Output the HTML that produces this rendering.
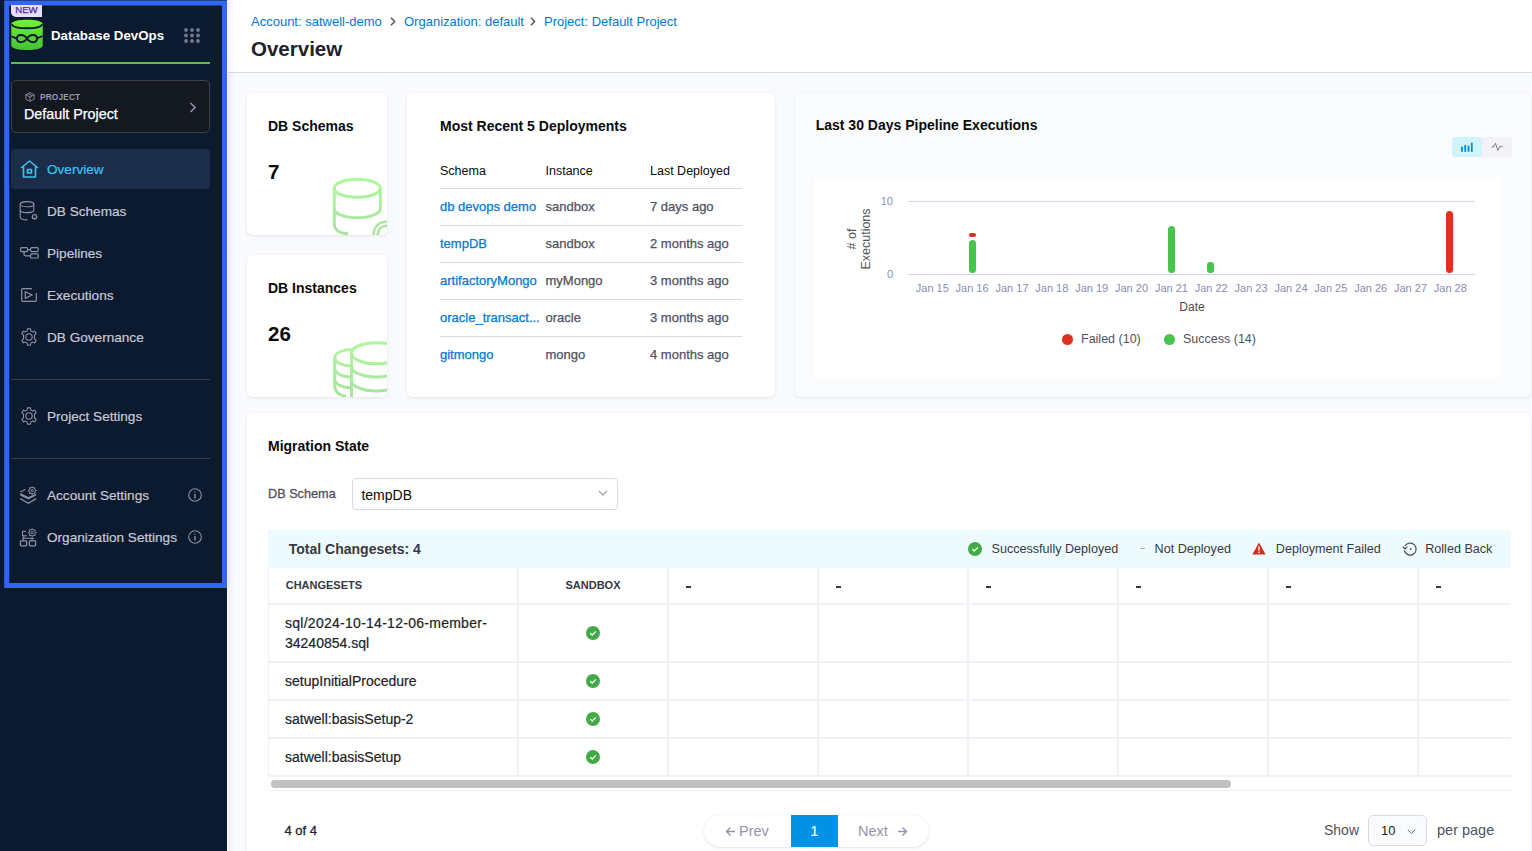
<!DOCTYPE html>
<html><head><meta charset="utf-8">
<style>
*{box-sizing:border-box;margin:0;padding:0}
html,body{width:1532px;height:851px;overflow:hidden;background:#f9fafd;font-family:"Liberation Sans",sans-serif;}
.a{position:absolute;white-space:nowrap;line-height:1}
#side{position:absolute;left:0;top:0;width:227px;height:851px;background:#0c1a2f}
#outline{position:absolute;left:4px;top:0.7px;width:223px;height:587.3px;border:5px solid #3264f5;border-top-width:4.6px}
.nav{position:absolute;left:11px;width:199px;height:40px;border-radius:4px;color:#c7c8d6;font-size:13.6px}
.nav .t{position:absolute;left:36px;top:13.5px;line-height:1;white-space:nowrap;-webkit-text-stroke:0.2px currentColor}
.nav svg{position:absolute;left:9px;top:11px;overflow:visible}
.nav.act{background:#1b2d48;color:#3dc3f3}
.dv{position:absolute;left:11px;width:199px;height:1px;background:#383b47}
#hdr{position:absolute;left:227px;top:0;width:1305px;height:73px;background:#fff;border-bottom:1px solid #d9dae5}
.card{position:absolute;background:#fff;border-radius:5px;box-shadow:0 0 1px rgba(40,41,61,.05),0 1px 3px rgba(96,97,112,.13)}
.h{font-weight:bold;color:#0b0b0d;font-size:14px}
.lk{font-size:13px;color:#0278d5;-webkit-text-stroke:0.25px #0278d5}
.gr{font-size:13px;color:#4f5162;-webkit-text-stroke:0.25px #4f5162}
.ax{font-size:11px;color:#8a8db0;line-height:11px}
.lg{font-size:12.5px;color:#4f5162;line-height:14px}
.th{font-size:11px;font-weight:bold;color:#383946}
.td{font-size:14px;color:#22222a;-webkit-text-stroke:0.2px #22222a}
.lgd{font-size:12.6px;color:#383946}
</style></head><body>
<!-- SIDEBAR -->
<div id="side">
  <svg class="a" style="left:0;top:0" width="227" height="590" viewBox="0 0 227 590"><path d="M4.2 0.5 H227 V588 H4.2 Z M9.2 5.5 V583 H222 V5.5 Z" fill="#3264f5" fill-rule="evenodd"/></svg>
  <!-- NEW badge -->
  <div class="a" style="left:11px;top:5px;width:31px;height:12px;background:#e8defc;border-bottom-left-radius:5px;color:#4b2a9b;font-size:9.6px;font-weight:normal;text-align:center;line-height:10px;-webkit-text-stroke:0.25px #4b2a9b">NEW</div>
  <!-- logo -->
  <svg class="a" style="left:11px;top:19px" width="32" height="32" viewBox="0 0 32 32">
    <defs><linearGradient id="lg" x1="0" y1="0" x2="0" y2="1"><stop offset="0" stop-color="#70f531"/><stop offset="1" stop-color="#45c034"/></linearGradient></defs>
    <path d="M0.3 5 C0.3 -0.8 31.7 -0.8 31.7 5 L31.7 26.5 C31.7 32.6 0.3 32.6 0.3 26.5 Z" fill="url(#lg)"/>
    <path d="M0.8 5.2 C2.5 10.6 29.5 10.6 31.2 5.2" fill="none" stroke="#0c1a2f" stroke-width="1.8"/>
    <path d="M0.5 17.4 L6.2 19.8 M25.8 19.4 L31.5 17" fill="none" stroke="#0c1a2f" stroke-width="1.8"/>
    <path d="M16 19.6 C13 14.8 6 14.8 6 19.6 C6 24.4 13 24.4 16 19.6 C19 14.8 26 14.8 26 19.6 C26 24.4 19 24.4 16 19.6 Z" fill="none" stroke="#0c1a2f" stroke-width="1.9"/>
  </svg>
  <div class="a" style="left:51px;top:28.8px;font-size:13.3px;font-weight:bold;color:#fff">Database DevOps</div>
  <!-- grid dots -->
  <svg class="a" style="left:184px;top:28px" width="16" height="15" viewBox="0 0 16 15" fill="#76788e">
    <circle cx="2" cy="2" r="1.9"/><circle cx="8" cy="2" r="1.9"/><circle cx="14" cy="2" r="1.9"/>
    <circle cx="2" cy="7.5" r="1.9"/><circle cx="8" cy="7.5" r="1.9"/><circle cx="14" cy="7.5" r="1.9"/>
    <circle cx="2" cy="13" r="1.9"/><circle cx="8" cy="13" r="1.9"/><circle cx="14" cy="13" r="1.9"/>
  </svg>
  <div class="a" style="left:11px;top:62px;width:199px;height:2px;background:#55c447"></div>
  <!-- project box -->
  <div class="a" style="left:11px;top:80px;width:199px;height:53px;background:#14181f;border:1px solid #3d4049;border-radius:5px"></div>
  <svg class="a" style="left:25px;top:92px" width="10" height="10" viewBox="0 0 10 10" fill="none" stroke="#8a8ca0" stroke-width="0.9">
    <path d="M5 0.6 L9.2 2.8 L9.2 7.2 L5 9.4 L0.8 7.2 L0.8 2.8 Z M0.8 2.8 L5 5 L9.2 2.8 M5 5 L5 9.4 M2.9 1.7 L7.1 3.9"/>
  </svg>
  <div class="a" style="left:40px;top:92.8px;font-size:8.3px;font-weight:bold;color:#9a9bb1;letter-spacing:0.15px">PROJECT</div>
  <div class="a" style="left:24px;top:107.3px;font-size:14.3px;color:#fff;font-weight:normal;-webkit-text-stroke:0.25px #fff">Default Project</div>
  <svg class="a" style="left:189px;top:102px" width="8" height="11" viewBox="0 0 8 11" fill="none" stroke="#8a8ca0" stroke-width="1.7"><path d="M1.5 1 L6 5.5 L1.5 10"/></svg>

  <!-- nav items -->
  <div class="nav act" style="top:149px">
    <svg width="19" height="18" viewBox="0 0 19 18" fill="none" stroke="#3dc3f3" stroke-width="1.6" style="top:11px;left:8.5px" stroke-linejoin="round"><path d="M1 8 L9.5 1 L18 8 M3.5 6.5 L3.5 17 L15.5 17 L15.5 6.5"/><rect x="7.5" y="9.5" width="4" height="3.5"/></svg>
    <span class="t">Overview</span>
  </div>
  <div class="nav" style="top:191px">
    <svg width="19" height="20" viewBox="0 0 19 20" fill="none" stroke="#8e8fa6" stroke-width="1.1" style="top:10px;left:9px"><ellipse cx="7" cy="3.2" rx="6.8" ry="2.6"/><path d="M0.2 3.2 V16 C0.2 18.6 5 19 7.5 18.8 M13.8 3.2 V10 M0.2 9.6 C0.2 12.3 13.8 12.3 13.8 9.6"/><circle cx="14.5" cy="15.8" r="2" /><path d="M14.5 12.8 V13.6 M14.5 18 V18.8 M11.5 15.8 H12.3 M16.7 15.8 H17.5 M12.4 13.7 L13 14.3 M16 17.3 L16.6 17.9 M16.6 13.7 L16 14.3 M13 17.3 L12.4 17.9"/></svg>
    <span class="t">DB Schemas</span>
  </div>
  <div class="nav" style="top:233px">
    <svg width="19" height="12" viewBox="0 0 19 12" fill="none" stroke="#8e8fa6" stroke-width="1.2" style="top:14px;left:9px"><rect x="0.6" y="0.6" width="7" height="4" rx="1"/><rect x="10.6" y="0.6" width="7.6" height="4" rx="1"/><rect x="10.6" y="6.8" width="7.6" height="4.2" rx="1"/><path d="M7.6 2.6 H10.6 M4 4.6 V7.5 C4 8.5 5 8.9 6 8.9 H10.6"/></svg>
    <span class="t">Pipelines</span>
  </div>
  <div class="nav" style="top:275px">
    <svg width="17" height="14" viewBox="0 0 17 14" fill="none" stroke="#8e8fa6" stroke-width="1.2" style="top:13px;left:10px"><path d="M11 0.7 H1.8 C1 0.7 0.7 1 0.7 1.8 V12.2 C0.7 13 1 13.3 1.8 13.3 H14.3 C15 13.3 15.3 13 15.3 12.2 V5"/><path d="M4.3 3.8 L11 7 L4.3 10.2 Z"/></svg>
    <span class="t">Executions</span>
  </div>
  <div class="nav" style="top:317px">
    <svg width="18" height="18" viewBox="0 0 18 18" fill="none" stroke="#8e8fa6" stroke-width="1.1" style="top:11px;left:9px"><path d="M7.6 0.8 H10.4 L10.9 3 L12.6 4 L14.7 3.2 L16.1 5.6 L14.5 7.2 V10.8 L16.1 12.4 L14.7 14.8 L12.6 14 L10.9 15 L10.4 17.2 H7.6 L7.1 15 L5.4 14 L3.3 14.8 L1.9 12.4 L3.5 10.8 V7.2 L1.9 5.6 L3.3 3.2 L5.4 4 L7.1 3 Z"/><circle cx="9" cy="9" r="3.2"/></svg>
    <span class="t">DB Governance</span>
  </div>
  <div class="dv" style="top:379px"></div>
  <div class="nav" style="top:396px">
    <svg width="18" height="18" viewBox="0 0 18 18" fill="none" stroke="#8e8fa6" stroke-width="1.1" style="top:11px;left:9px"><path d="M7.6 0.8 H10.4 L10.9 3 L12.6 4 L14.7 3.2 L16.1 5.6 L14.5 7.2 V10.8 L16.1 12.4 L14.7 14.8 L12.6 14 L10.9 15 L10.4 17.2 H7.6 L7.1 15 L5.4 14 L3.3 14.8 L1.9 12.4 L3.5 10.8 V7.2 L1.9 5.6 L3.3 3.2 L5.4 4 L7.1 3 Z"/><circle cx="9" cy="9" r="3.2"/></svg>
    <span class="t">Project Settings</span>
  </div>
  <div class="dv" style="top:458px"></div>
  <div class="nav" style="top:475px">
    <svg width="24" height="24" viewBox="0 0 24 24" fill="none" stroke="#8e8fa6" stroke-width="1.1" style="top:8px;left:6px"><path d="M3.2 9 L8.3 6.4"/><path d="M3.2 10 L11.3 14 L19.1 10.8 V12.6 L11.3 16.6 L3.2 12.4 Z" fill="#8e8fa6" stroke="none"/><path d="M3.2 15.6 L11.3 20.2 L19.2 15.6" stroke-width="1.3"/><circle cx="15.2" cy="7.6" r="3.2" stroke-width="1"/><circle cx="15.2" cy="7.6" r="1.1" stroke-width="1"/><path d="M15.2 3.4 V4.4 M15.2 10.8 V11.8 M11 7.6 H12 M18.4 7.6 H19.4 M12.2 4.6 L12.9 5.3 M17.5 9.9 L18.2 10.6 M18.2 4.6 L17.5 5.3 M12.9 9.9 L12.2 10.6" stroke-width="1.2"/></svg>
    <span class="t">Account Settings</span>
    <svg width="14" height="14" viewBox="0 0 14 14" fill="none" stroke="#8e8fa6" stroke-width="1.1" style="left:177px;top:13px"><circle cx="7" cy="7" r="6.3"/><path d="M7 6 V10.5" stroke-width="1.4"/><circle cx="7" cy="3.9" r="0.7" fill="#8e8fa6" stroke="none"/></svg>
  </div>
  <div class="nav" style="top:517px">
    <svg width="24" height="24" viewBox="0 0 24 24" fill="none" stroke="#8e8fa6" stroke-width="1.1" style="top:8px;left:6px"><path d="M9.3 6.3 H5.5 V10.8 H9.8"/><path d="M6.8 10.8 V13.2 M5 13.2 H17 M6.3 13.2 V15.6 M15 13.2 V15.6"/><rect x="3.4" y="15.8" width="6.2" height="5" rx="0.8" stroke-width="1.25"/><rect x="12.4" y="15.8" width="6.2" height="5" rx="0.8" stroke-width="1.25"/><circle cx="15.2" cy="7.6" r="3.2" stroke-width="1"/><circle cx="15.2" cy="7.6" r="1.1" stroke-width="1"/><path d="M15.2 3.4 V4.4 M15.2 10.8 V11.8 M11 7.6 H12 M18.4 7.6 H19.4 M12.2 4.6 L12.9 5.3 M17.5 9.9 L18.2 10.6 M18.2 4.6 L17.5 5.3 M12.9 9.9 L12.2 10.6" stroke-width="1.2"/></svg>
    <span class="t">Organization Settings</span>
    <svg width="14" height="14" viewBox="0 0 14 14" fill="none" stroke="#8e8fa6" stroke-width="1.1" style="left:177px;top:13px"><circle cx="7" cy="7" r="6.3"/><path d="M7 6 V10.5" stroke-width="1.4"/><circle cx="7" cy="3.9" r="0.7" fill="#8e8fa6" stroke="none"/></svg>
  </div>
</div>


<!-- HEADER -->
<div id="hdr">
  <div class="a" style="left:24px;top:14.8px;font-size:13px;color:#0278d5">Account: satwell-demo</div>
  <svg class="a" style="left:163px;top:17px" width="6" height="9" viewBox="0 0 6 9" fill="none" stroke="#4f5162" stroke-width="1.4"><path d="M1 0.8 L4.6 4.5 L1 8.2"/></svg>
  <div class="a" style="left:177px;top:14.8px;font-size:13px;color:#0278d5">Organization: default</div>
  <svg class="a" style="left:303px;top:17px" width="6" height="9" viewBox="0 0 6 9" fill="none" stroke="#4f5162" stroke-width="1.4"><path d="M1 0.8 L4.6 4.5 L1 8.2"/></svg>
  <div class="a" style="left:317px;top:14.8px;font-size:13px;color:#0278d5">Project: Default Project</div>
  <div class="a" style="left:24px;top:39.1px;font-size:20.5px;font-weight:bold;color:#22222a">Overview</div>
</div>

<!-- MAIN -->
<!-- CARDS -->
<div class="card" style="left:247px;top:93px;width:140px;height:142px;overflow:hidden">
  <div class="a h" style="left:21px;top:25.9px">DB Schemas</div>
  <div class="a" style="left:21px;top:69.3px;font-size:20.5px;font-weight:bold;color:#0b0b0d">7</div>
  <svg class="a" style="left:0;top:0" width="140" height="142" viewBox="0 0 140 142" fill="none" stroke="url(#gg)" stroke-width="3">
    <defs><linearGradient id="gg" gradientUnits="userSpaceOnUse" x1="0" y1="85" x2="0" y2="142"><stop offset="0" stop-color="#aff89b"/><stop offset="1" stop-color="#a7e3a0"/></linearGradient></defs>
    <ellipse cx="110.3" cy="95.3" rx="23" ry="9"/>
    <path d="M87.3 95.3 V115.7 A23 9 0 0 0 133.3 115.7 V95.3"/>
    <path d="M87.3 115.7 V131 C87.3 137 93 140.5 101 140.8"/>
    <circle cx="139" cy="141" r="12.3" stroke-width="2.6"/><circle cx="139" cy="141" r="8.2" stroke-width="2.6"/>
  </svg>
</div>
<div class="card" style="left:247px;top:255px;width:140px;height:142px;overflow:hidden">
  <div class="a h" style="left:21px;top:26.15px">DB Instances</div>
  <div class="a" style="left:21px;top:69.3px;font-size:20.5px;font-weight:bold;color:#0b0b0d">26</div>
  <svg class="a" style="left:0;top:0" width="140" height="142" viewBox="0 0 140 142" fill="none" stroke="url(#gg2)" stroke-width="3">
    <defs><linearGradient id="gg2" gradientUnits="userSpaceOnUse" x1="0" y1="85" x2="0" y2="142"><stop offset="0" stop-color="#aff89b"/><stop offset="1" stop-color="#a7e3a0"/></linearGradient></defs>
    <path d="M104.5 94.6 A17 8.2 0 0 0 87.7 102.75 A17 8.2 0 0 0 104.5 110.9"/>
    <path d="M87.7 102.75 V131 C87.7 137 92 140 99 141.5"/>
    <path d="M87.7 113.8 A17 8.2 0 0 0 104.5 122 M87.7 124.6 A17 8.2 0 0 0 104.5 132.8"/>
    <ellipse cx="129.5" cy="98.25" rx="25" ry="10.6"/>
    <path d="M104.5 98.25 V142"/>
    <path d="M104.5 111.4 A25 10.6 0 0 0 154.5 111.4 M104.5 125.4 A25 10.6 0 0 0 154.5 125.4"/>
  </svg>
</div>
<div class="card" style="left:407px;top:93px;width:368px;height:304px">
  <div class="a h" style="left:33px;top:26.15px">Most Recent 5 Deployments</div>
  <div class="a" style="left:33px;top:71.6px;font-size:12.5px;color:#0b0b0d">Schema</div>
  <div class="a" style="left:138.5px;top:71.6px;font-size:12.5px;color:#0b0b0d">Instance</div>
  <div class="a" style="left:243px;top:71.6px;font-size:12.5px;color:#0b0b0d">Last Deployed</div>
  <div class="a" style="left:33px;top:95px;width:302px;height:1px;background:#d9dae5"></div>
  <div class="a" style="left:33px;top:132px;width:302px;height:1px;background:#d9dae5"></div>
  <div class="a" style="left:33px;top:169px;width:302px;height:1px;background:#d9dae5"></div>
  <div class="a" style="left:33px;top:206px;width:302px;height:1px;background:#d9dae5"></div>
  <div class="a" style="left:33px;top:243px;width:302px;height:1px;background:#d9dae5"></div>
  <div class="a lk" style="left:33px;top:107px">db devops demo</div><div class="a gr" style="left:138.5px;top:107px">sandbox</div><div class="a gr" style="left:243px;top:107px">7 days ago</div>
  <div class="a lk" style="left:33px;top:144px">tempDB</div><div class="a gr" style="left:138.5px;top:144px">sandbox</div><div class="a gr" style="left:243px;top:144px">2 months ago</div>
  <div class="a lk" style="left:33px;top:181px">artifactoryMongo</div><div class="a gr" style="left:138.5px;top:181px">myMongo</div><div class="a gr" style="left:243px;top:181px">3 months ago</div>
  <div class="a lk" style="left:33px;top:218px">oracle_transact...</div><div class="a gr" style="left:138.5px;top:218px">oracle</div><div class="a gr" style="left:243px;top:218px">3 months ago</div>
  <div class="a lk" style="left:33px;top:255px">gitmongo</div><div class="a gr" style="left:138.5px;top:255px">mongo</div><div class="a gr" style="left:243px;top:255px">4 months ago</div>
</div>
<div class="card" style="left:795px;top:93px;width:736px;height:304px;background:#fafbfc">
  <div class="a h" style="left:20.7px;top:25.15px">Last 30 Days Pipeline Executions</div>
  <div class="a" style="left:657px;top:44px;width:60px;height:20px;background:#f2f2f8;border-radius:4px"></div>
  <div class="a" style="left:657px;top:44px;width:30px;height:20px;background:#cff4fc;border-radius:4px"></div>
  <svg class="a" style="left:665px;top:48px" width="14" height="12" viewBox="0 0 14 12" fill="#0a8bdc"><rect x="1" y="5.6" width="1.8" height="5.4" rx="0.8"/><rect x="4.3" y="3.8" width="1.8" height="7.2" rx="0.8"/><rect x="7.6" y="4.6" width="1.8" height="6.4" rx="0.8"/><rect x="10.9" y="1.6" width="1.8" height="9.4" rx="0.8"/></svg>
  <svg class="a" style="left:696px;top:49px" width="13" height="10" viewBox="0 0 13 10" fill="none" stroke="#6b6d85" stroke-width="0.9" stroke-linejoin="round"><path d="M0.5 5 H2.3 L4.5 1.3 L6.8 8.5 L8.8 4.6 H11.6"/></svg>
</div>
<div class="a" style="left:815px;top:177px;width:685px;height:200px;background:#fff"></div>
<!-- chart -->
<div class="a" style="left:908px;top:201px;width:567px;height:1px;background:#d8d9e8"></div>
<div class="a" style="left:908px;top:273.5px;width:567px;height:1px;background:#ccd6eb"></div>
<div class="a ax" style="left:873px;top:196px;width:20px;text-align:right">10</div>
<div class="a ax" style="left:873px;top:269px;width:20px;text-align:right">0</div>

<div class="a" style="left:824px;top:225px;width:70px;height:28px;transform:rotate(-90deg);font-size:12.5px;color:#555;text-align:center;line-height:14px">&#35; of<br>Executions</div>
<div class="a ax" style="left:907.3px;top:282.5px;width:50px;text-align:center">Jan 15</div><div class="a ax" style="left:947.1px;top:282.5px;width:50px;text-align:center">Jan 16</div><div class="a ax" style="left:987.0px;top:282.5px;width:50px;text-align:center">Jan 17</div><div class="a ax" style="left:1026.8px;top:282.5px;width:50px;text-align:center">Jan 18</div><div class="a ax" style="left:1066.7px;top:282.5px;width:50px;text-align:center">Jan 19</div><div class="a ax" style="left:1106.5px;top:282.5px;width:50px;text-align:center">Jan 20</div><div class="a ax" style="left:1146.4px;top:282.5px;width:50px;text-align:center">Jan 21</div><div class="a ax" style="left:1186.2px;top:282.5px;width:50px;text-align:center">Jan 22</div><div class="a ax" style="left:1226.1px;top:282.5px;width:50px;text-align:center">Jan 23</div><div class="a ax" style="left:1266.0px;top:282.5px;width:50px;text-align:center">Jan 24</div><div class="a ax" style="left:1305.8px;top:282.5px;width:50px;text-align:center">Jan 25</div><div class="a ax" style="left:1345.7px;top:282.5px;width:50px;text-align:center">Jan 26</div><div class="a ax" style="left:1385.5px;top:282.5px;width:50px;text-align:center">Jan 27</div><div class="a ax" style="left:1425.3px;top:282.5px;width:50px;text-align:center">Jan 28</div>
<div class="a" style="left:969px;top:240px;width:7px;height:33px;background:#46c44b;border-radius:3.5px"></div>
<div class="a" style="left:969px;top:233px;width:7px;height:4px;background:#e0301e;border-radius:2px"></div>
<div class="a" style="left:1168px;top:226px;width:7px;height:47px;background:#46c44b;border-radius:3.5px"></div>
<div class="a" style="left:1207px;top:262px;width:7px;height:11px;background:#46c44b;border-radius:3px"></div>
<div class="a" style="left:1446px;top:211px;width:7px;height:62px;background:#e0301e;border-radius:3.5px"></div>
<div class="a" style="left:1167px;top:300px;width:50px;text-align:center;font-size:12px;color:#4a4a4a;line-height:14px">Date</div>
<div class="a" style="left:1062px;top:333.5px;width:11px;height:11px;border-radius:50%;background:#e0301e"></div>
<div class="a lg" style="left:1081px;top:332px">Failed (10)</div>
<div class="a" style="left:1164px;top:333.5px;width:11px;height:11px;border-radius:50%;background:#46c44b"></div>
<div class="a lg" style="left:1183px;top:332px">Success (14)</div>

<!-- MIGRATION -->
<div class="card" style="left:247px;top:413px;width:1284px;height:460px"></div>
<div class="a h" style="left:268px;top:438.8px">Migration State</div>
<div class="a" style="left:268px;top:487.5px;font-size:12.7px;color:#4f5162;-webkit-text-stroke:0.3px #4f5162">DB Schema</div>
<div class="a" style="left:352px;top:478px;width:266px;height:32px;border:1px solid #d9dae5;border-radius:4px;background:#fff"></div>
<div class="a" style="left:361.4px;top:488.15px;font-size:14px;color:#0b0b0d">tempDB</div>
<svg class="a" style="left:598px;top:490px" width="10" height="6" viewBox="0 0 10 6" fill="none" stroke="#a3a4b8" stroke-width="1.3"><path d="M1 1 L5 5 L9 1"/></svg>
<div class="a" style="left:268px;top:530px;width:1243px;height:38px;background:#edfbff"></div>
<div class="a" style="left:288.8px;top:542.45px;font-size:14px;font-weight:bold;color:#383946">Total Changesets: 4</div>


<!-- TABLE -->
<div class="a" style="left:268px;top:568px;width:1243px;height:209px;background:#fff;overflow:hidden" id="tb">
<div class="a" style="left:0;top:0;width:1px;height:209px;background:#f0f0f7"></div><div class="a" style="left:249px;top:0;width:2px;height:209px;background:#f0f0f7"></div><div class="a" style="left:399px;top:0;width:2px;height:209px;background:#f0f0f7"></div><div class="a" style="left:549px;top:0;width:2px;height:209px;background:#f0f0f7"></div><div class="a" style="left:699px;top:0;width:2px;height:209px;background:#f0f0f7"></div><div class="a" style="left:849px;top:0;width:2px;height:209px;background:#f0f0f7"></div><div class="a" style="left:999px;top:0;width:2px;height:209px;background:#f0f0f7"></div><div class="a" style="left:1149px;top:0;width:2px;height:209px;background:#f0f0f7"></div><div class="a" style="left:0;top:35px;width:1243px;height:2px;background:#f0f0f7"></div><div class="a" style="left:0;top:93px;width:1243px;height:2px;background:#f0f0f7"></div><div class="a" style="left:0;top:131px;width:1243px;height:2px;background:#f0f0f7"></div><div class="a" style="left:0;top:169px;width:1243px;height:2px;background:#f0f0f7"></div><div class="a" style="left:0;top:207px;width:1243px;height:2px;background:#f0f0f7"></div></div><div class="a th" style="left:285.7px;top:579.7px">CHANGESETS</div><div class="a th" style="left:543px;top:579.7px;width:100px;text-align:center">SANDBOX</div><div class="a" style="left:686px;top:586px;width:5px;height:1.5px;background:#383946"></div><div class="a" style="left:836px;top:586px;width:5px;height:1.5px;background:#383946"></div><div class="a" style="left:986px;top:586px;width:5px;height:1.5px;background:#383946"></div><div class="a" style="left:1136px;top:586px;width:5px;height:1.5px;background:#383946"></div><div class="a" style="left:1286px;top:586px;width:5px;height:1.5px;background:#383946"></div><div class="a" style="left:1436px;top:586px;width:5px;height:1.5px;background:#383946"></div><div class="a td" style="left:285px;top:616.35px;letter-spacing:0.27px">sql/2024-10-14-12-06-member-</div><svg class="a" style="left:586px;top:626px" width="14" height="14" viewBox="0 0 14 14"><circle cx="7" cy="7" r="7" fill="#42ab45"/><path d="M4.3 7.2 L6.2 9 L9.8 5.4" fill="none" stroke="#fff" stroke-width="1.3"/></svg><div class="a td" style="left:285px;top:674.15px">setupInitialProcedure</div><svg class="a" style="left:586px;top:674px" width="14" height="14" viewBox="0 0 14 14"><circle cx="7" cy="7" r="7" fill="#42ab45"/><path d="M4.3 7.2 L6.2 9 L9.8 5.4" fill="none" stroke="#fff" stroke-width="1.3"/></svg><div class="a td" style="left:285px;top:712.05px">satwell:basisSetup-2</div><svg class="a" style="left:586px;top:712px" width="14" height="14" viewBox="0 0 14 14"><circle cx="7" cy="7" r="7" fill="#42ab45"/><path d="M4.3 7.2 L6.2 9 L9.8 5.4" fill="none" stroke="#fff" stroke-width="1.3"/></svg><div class="a td" style="left:285px;top:749.75px">satwell:basisSetup</div><svg class="a" style="left:586px;top:750px" width="14" height="14" viewBox="0 0 14 14"><circle cx="7" cy="7" r="7" fill="#42ab45"/><path d="M4.3 7.2 L6.2 9 L9.8 5.4" fill="none" stroke="#fff" stroke-width="1.3"/></svg><div class="a td" style="left:285px;top:636.35px">34240854.sql</div><div class="a" style="left:268px;top:777px;width:1243px;height:14px;background:#fff;border-bottom:1px solid #ededf3"></div><div class="a" style="left:271px;top:780px;width:960px;height:8px;background:#c1c1c1;border-radius:4px"></div><div class="a" style="left:284.5px;top:823.5px;font-size:13px;color:#22222a;-webkit-text-stroke:0.3px #22222a">4 of 4</div><div class="a" style="left:704px;top:815px;width:225px;height:32px;border-radius:16px;background:#fff;box-shadow:0 0 1px rgba(40,41,61,.12),0 1px 3px rgba(96,97,112,.16)"></div>
<div class="a" style="left:791px;top:815px;width:47px;height:32px;background:#0092e4"></div>
<div class="a" style="left:791px;top:824px;width:47px;text-align:center;font-size:14px;color:#fff;-webkit-text-stroke:0.2px #fff">1</div>
<svg class="a" style="left:725px;top:826px" width="11" height="11" viewBox="0 0 11 11" fill="none" stroke="#9293ab" stroke-width="1.4"><path d="M10 5.5 H1.5 M5.5 1.5 L1.5 5.5 L5.5 9.5"/></svg>
<div class="a" style="left:739px;top:824px;font-size:14.5px;color:#9293ab">Prev</div>
<div class="a" style="left:858px;top:824px;font-size:14.5px;color:#9293ab">Next</div>
<svg class="a" style="left:897px;top:826px" width="11" height="11" viewBox="0 0 11 11" fill="none" stroke="#9293ab" stroke-width="1.4"><path d="M1 5.5 H9.5 M5.5 1.5 L9.5 5.5 L5.5 9.5"/></svg>
<div class="a" style="left:1324px;top:823px;font-size:14px;color:#4f5162">Show</div>
<div class="a" style="left:1368px;top:815px;width:59px;height:31px;border:1px solid #d9dae5;border-radius:5px;background:#fafbff"></div>
<div class="a" style="left:1381px;top:824px;font-size:13px;color:#22222a">10</div>
<svg class="a" style="left:1407px;top:829px" width="9" height="5" viewBox="0 0 9 5" fill="none" stroke="#6b6d85" stroke-width="1"><path d="M0.8 0.8 L4.5 4.3 L8.2 0.8"/></svg>
<div class="a" style="left:1437px;top:823px;font-size:14.5px;color:#4f5162">per page</div>
<svg class="a" style="left:968px;top:542px" width="14" height="14" viewBox="0 0 14 14"><circle cx="7" cy="7" r="7" fill="#42ab45"/><path d="M4.3 7.2 L6.2 9 L9.8 5.4" fill="none" stroke="#fff" stroke-width="1.3"/></svg>
<div class="a lgd" style="left:991.5px;top:542.7px">Successfully Deployed</div>
<div class="a" style="left:1140px;top:548px;width:5px;height:1.2px;background:#b0b1c4"></div>
<div class="a lgd" style="left:1154.6px;top:542.7px">Not Deployed</div>
<svg class="a" style="left:1252px;top:542px" width="14" height="13" viewBox="0 0 14 13"><path d="M7 0.5 L13.6 12.5 H0.4 Z" fill="#da291d"/><rect x="6.3" y="4.3" width="1.4" height="4.3" fill="#fff"/><rect x="6.3" y="9.6" width="1.4" height="1.4" fill="#fff"/></svg>
<div class="a lgd" style="left:1275.8px;top:542.7px">Deployment Failed</div>
<svg class="a" style="left:1402px;top:541px" width="16" height="16" viewBox="0 0 16 16" fill="none" stroke="#4f5162" stroke-width="1.2"><path d="M3 5 A6 6 0 1 1 2.3 9.5"/><path d="M0.8 5.5 L3 8 L5.3 5.6"/><circle cx="8.7" cy="8" r="0.9" fill="#4f5162" stroke="none"/></svg>
<div class="a lgd" style="left:1425.2px;top:542.7px">Rolled Back</div>

<div class="a" style="left:227px;top:0;width:1px;height:851px;background:#fcfcfd"></div><div class="a" style="left:228px;top:0;width:6px;height:851px;background:linear-gradient(to right,rgba(60,70,100,.07),rgba(60,70,100,0))"></div>
</body></html>
